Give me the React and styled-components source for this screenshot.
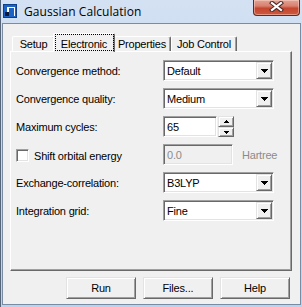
import React from "react";
import styled, { createGlobalStyle } from "styled-components";

const Global = createGlobalStyle`
  html, body { margin: 0; padding: 0; }
  body {
    background: #c3d5ec;
    font-family: "Liberation Sans", Arial, sans-serif;
    font-size: 11px;
    color: #000;
  }
`;

const Window = styled.div`
  width: 302px;
  height: 307px;
  box-sizing: border-box;
  display: flex;
  flex-direction: column;
  background: linear-gradient(180deg, #d3e1f3 0%, #c7d9ef 35%, #bed2eb 100%);
  border-left: 1px solid #55657a;
  padding: 0 1px 2px 1px;
  overflow: hidden;
`;

const TitleBar = styled.div`
  height: 23px;
  flex: none;
  display: flex;
  align-items: center;
`;

const AppIcon = styled.svg`
  width: 14px;
  height: 14px;
  margin-left: 1px;
  margin-top: -2px;
  flex: none;
`;

const Title = styled.div`
  margin-left: 7px;
  margin-top: -1px;
  font-family: "Open Sans", "Noto Sans", sans-serif;
  font-size: 12px;
  color: #000;
  letter-spacing: 0.05px;
`;

const CloseButton = styled.div`
  margin-left: auto;
  margin-right: 1px;
  align-self: flex-start;
  width: 47px;
  height: 16px;
  box-sizing: border-box;
  border: 1px solid #5e2a24;
  border-top: none;
  border-radius: 0 0 4px 4px;
  background: linear-gradient(180deg, #e3a293 0%, #d8806f 40%, #c5452f 55%, #cc5a3e 100%);
  box-shadow: inset 0 0 0 1px rgba(255, 225, 215, 0.45);
  display: flex;
  align-items: center;
  justify-content: center;
  padding-bottom: 2px;
`;

const Client = styled.div`
  height: 282px;
  flex: none;
  box-sizing: border-box;
  border: 1px solid #7a8ca4;
  background: #f0f0f0;
  display: flex;
  flex-direction: column;
`;

const TabStrip = styled.div`
  height: 27px;
  flex: none;
  display: flex;
  align-items: flex-end;
  padding-left: 9px;
`;

const Tab = styled.div`
  position: relative;
  box-sizing: border-box;
  width: ${(p) => (p.$active ? p.$w + 4 : p.$w)}px;
  height: ${(p) => (p.$active ? 19 : 15)}px;
  margin: ${(p) => (p.$active ? "0 -2px -1px -2px" : "0")};
  z-index: ${(p) => (p.$active ? 3 : 1)};
  background: #f0f0f0;
  border-top: 1px solid #fff;
  border-left: 1px solid #fff;
  border-right: 1px solid #696969;
  border-radius: 2px 2px 0 0;
  box-shadow: inset -1px 0 0 #a0a0a0;
  display: flex;
  justify-content: center;
  align-items: ${(p) => (p.$active ? "flex-start" : "center")};
  padding-top: ${(p) => (p.$active ? 1 : 0)}px;
  letter-spacing: -0.2px;
  white-space: nowrap;
`;

const FocusRect = styled.div`
  position: absolute;
  left: 1px;
  right: 0px;
  top: 0px;
  bottom: 1px;
  border: 1px dotted #000;
  pointer-events: none;
`;

const TabLabel = styled.span`
  line-height: 14px;
  padding-top: ${(p) => (p.$active ? 2 : 0)}px;
`;

const Panel = styled.div`
  position: relative;
  z-index: 2;
  margin: 0 8px 0 7px;
  height: 220px;
  flex: none;
  box-sizing: border-box;
  background: #f0f0f0;
  border-top: 1px solid #fff;
  border-left: 1px solid #fff;
  border-right: 1px solid #696969;
  border-bottom: 1px solid #696969;
  box-shadow: inset -1px -1px 0 #a0a0a0;
  padding: 8px 0 0 5px;
`;

const FormGrid = styled.div`
  display: grid;
  grid-template-columns: 147px auto;
  grid-auto-rows: 21px;
  row-gap: 7px;
  align-items: center;
`;

const Label = styled.div`
  letter-spacing: -0.2px;
  white-space: nowrap;
  color: ${(p) => (p.$disabled ? "#8b8b8b" : "#000")};
`;

const CheckRow = styled.label`
  display: flex;
  align-items: center;
  gap: 5px;
  letter-spacing: -0.2px;
  white-space: nowrap;
  margin-top: 2px;
`;

const CheckBox = styled.span`
  width: 13px;
  height: 13px;
  box-sizing: border-box;
  background: #fff;
  border: 1px solid;
  border-color: #a0a0a0 #fff #fff #a0a0a0;
  box-shadow: inset 1px 1px 0 #696969, inset -1px -1px 0 #e3e3e3;
  flex: none;
`;

const Sunken = styled.div`
  width: ${(p) => p.$w}px;
  height: 21px;
  box-sizing: border-box;
  background: ${(p) => (p.$disabled ? "#f0f0f0" : "#fff")};
  color: ${(p) => (p.$disabled ? "#8b8b8b" : "#000")};
  border: 1px solid;
  border-color: #a0a0a0 #fff #fff #a0a0a0;
  box-shadow: inset 1px 1px 0 #696969, inset -1px -1px 0 #e3e3e3;
  display: flex;
  align-items: center;
  padding: 0 1px 0 3px;
  letter-spacing: -0.2px;
  white-space: nowrap;
`;

const ComboText = styled.span`
  flex: 1;
`;

const Raised = styled.div`
  box-sizing: border-box;
  background: #f0f0f0;
  border: 1px solid;
  border-color: #e3e3e3 #696969 #696969 #e3e3e3;
  box-shadow: inset 1px 1px 0 #fff, inset -1px -1px 0 #a0a0a0;
  display: flex;
  align-items: center;
  justify-content: center;
`;

const DropButton = styled(Raised)`
  width: 16px;
  height: 17px;
  flex: none;
`;

const Field = styled.div`
  display: flex;
  align-items: center;
`;

const Spin = styled.div`
  display: flex;
  flex-direction: column;
  margin-left: 1px;
`;

const SpinButton = styled(Raised)`
  width: 16px;
  height: ${(p) => p.$h}px;
`;

const Unit = styled.span`
  margin-left: 9px;
  color: #8b8b8b;
  letter-spacing: -0.2px;
`;

const ButtonRow = styled.div`
  margin-top: 6px;
  display: flex;
  justify-content: flex-end;
  gap: 7px;
  padding-right: 10px;
`;

const PushButton = styled(Raised)`
  width: 70px;
  height: 22px;
  letter-spacing: -0.2px;
`;

const Arrow = ({ up, w = 7, h = 4 }) => (
  <svg width={w} height={h} viewBox={`0 0 ${w} ${h}`} shapeRendering="crispEdges">
    <path
      d={up ? `M${w / 2} 0 L${w} ${h} L0 ${h} Z` : `M0 0 L${w} 0 L${w / 2} ${h} Z`}
      fill="#000"
    />
  </svg>
);

const Combo = ({ value }) => (
  <Sunken $w={111}>
    <ComboText>{value}</ComboText>
    <DropButton>
      <Arrow />
    </DropButton>
  </Sunken>
);

const tabs = [
  { name: "Setup", w: 43 },
  { name: "Electronic", w: 58, active: true },
  { name: "Properties", w: 58 },
  { name: "Job Control", w: 66 },
];

export default function App() {
  return (
    <>
      <Global />
      <Window>
        <TitleBar>
          <AppIcon viewBox="0 0 14 14" shapeRendering="crispEdges">
            <rect x="0" y="0" width="14" height="14" fill="#1d63c4" />
            <rect x="0.5" y="0.5" width="13" height="13" fill="none" stroke="#0d3f8a" />
            <path d="M5 12 V3.5 H11.5 V12" fill="none" stroke="#fff" strokeWidth="1.6" />
            <rect x="2" y="8" width="4" height="4" fill="#0a1a3a" />
          </AppIcon>
          <Title>Gaussian Calculation</Title>
          <CloseButton>
            <svg width="15" height="11" viewBox="0 0 15 11">
              <path d="M3 2 L12 9 M12 2 L3 9" stroke="#4a2c2a" strokeWidth="4.2" strokeLinecap="square" />
              <path d="M3 2 L12 9 M12 2 L3 9" stroke="#fff" strokeWidth="2.2" strokeLinecap="square" />
            </svg>
          </CloseButton>
        </TitleBar>
        <Client>
          <TabStrip>
            {tabs.map((t) => (
              <Tab key={t.name} $w={t.w} $active={t.active}>
                <TabLabel $active={t.active}>{t.name}</TabLabel>
                {t.active && <FocusRect />}
              </Tab>
            ))}
          </TabStrip>
          <Panel>
            <FormGrid>
              <Label>Convergence method:</Label>
              <Combo value="Default" />
              <Label>Convergence quality:</Label>
              <Combo value="Medium" />
              <Label>Maximum cycles:</Label>
              <Field>
                <Sunken $w={54}>65</Sunken>
                <Spin>
                  <SpinButton $h={11}>
                    <Arrow up w={5} h={3} />
                  </SpinButton>
                  <SpinButton $h={10}>
                    <Arrow w={5} h={3} />
                  </SpinButton>
                </Spin>
              </Field>
              <CheckRow>
                <CheckBox />
                Shift orbital energy
              </CheckRow>
              <Field>
                <Sunken $w={70} $disabled>
                  0.0
                </Sunken>
                <Unit>Hartree</Unit>
              </Field>
              <Label>Exchange-correlation:</Label>
              <Combo value="B3LYP" />
              <Label>Integration grid:</Label>
              <Combo value="Fine" />
            </FormGrid>
          </Panel>
          <ButtonRow>
            <PushButton>Run</PushButton>
            <PushButton>Files...</PushButton>
            <PushButton>Help</PushButton>
          </ButtonRow>
        </Client>
      </Window>
    </>
  );
}
